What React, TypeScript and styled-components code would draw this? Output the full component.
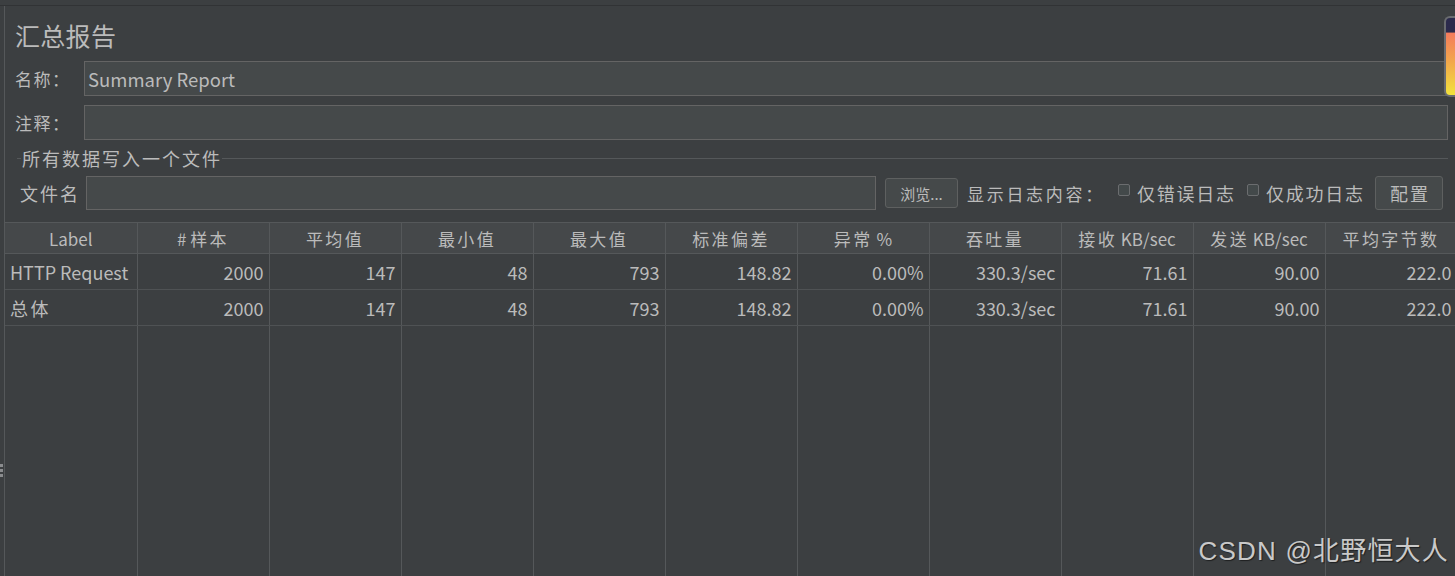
import React from "react";
import styled, { createGlobalStyle } from "styled-components";

const GlobalStyle = createGlobalStyle`
  html, body {
    margin: 0;
    padding: 0;
    background: #3c3f41;
    overflow: hidden;
  }
  * {
    box-sizing: border-box;
  }
`;

const font = `"Noto Sans CJK SC", "Noto Sans", sans-serif`;

const columns = [
  "Label",
  "# 样本",
  "平均值",
  "最小值",
  "最大值",
  "标准偏差",
  "异常 %",
  "吞吐量",
  "接收 KB/sec",
  "发送 KB/sec",
  "平均字节数",
];

const rows = [
  ["HTTP Request", "2000", "147", "48", "793", "148.82", "0.00%", "330.3/sec", "71.61", "90.00", "222.0"],
  ["总体", "2000", "147", "48", "793", "148.82", "0.00%", "330.3/sec", "71.61", "90.00", "222.0"],
];

// the Swing UI spaces han glyphs wider than latin ones, so wrap han runs
function spaced(text: string) {
  return text.split(/([\u3000-\u9fff\uff00-\uffef]+)/).map((part, i) =>
    /[\u3000-\u9fff\uff00-\uffef]/.test(part) ? <Han key={i}>{part}</Han> : part
  );
}

export default function App() {
  return (
    <>
      <GlobalStyle />
      <Frame>
        <TopStrip />
        <Body>
          <Rail>
            <Grip>
              <span />
              <span />
              <span />
            </Grip>
          </Rail>
          <Content>
            <Form>
              <Title>汇总报告</Title>
              <FieldRow>
                <FieldLabel>名称：</FieldLabel>
                <TextInput defaultValue="Summary Report" readOnly />
              </FieldRow>
              <FieldRow $last>
                <FieldLabel>注释：</FieldLabel>
                <TextInput defaultValue="" readOnly />
              </FieldRow>
              <Group>
                <GroupTitle>所有数据写入一个文件</GroupTitle>
                <FileRow>
                  <FileLabel>文件名</FileLabel>
                  <FileInput readOnly />
                  <SmallButton>浏览...</SmallButton>
                  <Caption>显示日志内容：</Caption>
                  <Check>
                    <Box />
                    仅错误日志
                  </Check>
                  <Check>
                    <Box />
                    仅成功日志
                  </Check>
                  <ConfigButton>配置</ConfigButton>
                </FileRow>
              </Group>
            </Form>
            <TableWrap>
              <Table>
                <colgroup>
                  {columns.map((c) => (
                    <col key={c} style={{ width: 132 }} />
                  ))}
                </colgroup>
                <thead>
                  <tr>
                    {columns.map((c) => (
                      <Th key={c}>{spaced(c)}</Th>
                    ))}
                  </tr>
                </thead>
                <tbody>
                  {rows.map((r, i) => (
                    <tr key={i}>
                      {r.map((v, j) => (
                        <Td key={j} $left={j === 0}>
                          {spaced(v)}
                        </Td>
                      ))}
                    </tr>
                  ))}
                  <tr>
                    {columns.map((c) => (
                      <Filler key={c} />
                    ))}
                  </tr>
                </tbody>
              </Table>
            </TableWrap>
          </Content>
        </Body>
        <Gauge />
        <Watermark>CSDN @北野恒大人</Watermark>
      </Frame>
    </>
  );
}

const Han = styled.span`
  letter-spacing: 2.4px;
`;

const Frame = styled.div`
  position: relative;
  width: 1455px;
  height: 576px;
  display: flex;
  flex-direction: column;
  background: #3c3f41;
  color: #bbbbbb;
  font-family: ${font};
  overflow: hidden;
`;

const TopStrip = styled.div`
  height: 6px;
  border-bottom: 1px solid #313335;
  flex-shrink: 0;
`;

const Body = styled.div`
  flex: 1;
  display: flex;
  min-height: 0;
`;

const Rail = styled.div`
  position: relative;
  width: 5px;
  border-right: 1px solid #55585a;
  flex-shrink: 0;
`;

const Grip = styled.div`
  position: absolute;
  left: 0;
  top: 458px;
  display: flex;
  flex-direction: column;
  gap: 2px;

  span {
    display: block;
    width: 3px;
    height: 3px;
    background: #8a8c8e;
  }
`;

const Content = styled.div`
  flex: 1;
  display: flex;
  flex-direction: column;
  min-width: 0;
`;

const Form = styled.div`
  padding: 13px 7px 0 10px;
  display: flex;
  flex-direction: column;
`;

const Title = styled.div`
  font-size: 25px;
  line-height: 32px;
  height: 34px;
  margin-bottom: 8px;
  letter-spacing: 0.3px;
`;

const FieldRow = styled.div<{ $last?: boolean }>`
  display: flex;
  align-items: center;
  margin-bottom: ${(p) => (p.$last ? 6 : 9)}px;
`;

const FieldLabel = styled.div`
  width: 69px;
  font-size: 17px;
  letter-spacing: 1.5px;
`;

const TextInput = styled.input`
  flex: 1;
  height: 35px;
  background: #45494a;
  border: 1px solid #646464;
  color: #bbbbbb;
  font-family: ${font};
  font-size: 18.5px;
  padding: 0 3px;
  outline: none;
`;

const Group = styled.div`
  display: flex;
  flex-direction: column;
  padding: 0 0 0 2px;
`;

const GroupTitle = styled.div`
  display: flex;
  align-items: center;
  font-size: 18px;
  line-height: 24px;
  letter-spacing: 2px;
  margin-bottom: 6px;

  &::before {
    content: "";
    width: 4px;
    height: 1px;
    background: #55585a;
    margin-right: 1px;
  }

  &::after {
    content: "";
    flex: 1;
    height: 1px;
    background: #55585a;
    margin-left: 0;
  }
`;

const FileRow = styled.div`
  display: flex;
  align-items: center;
  padding-left: 3px;
  height: 34px;
`;

const FileLabel = styled.div`
  width: 66px;
  font-size: 18px;
  letter-spacing: 2px;
`;

const FileInput = styled.input`
  width: 790px;
  height: 34px;
  background: #45494a;
  border: 1px solid #646464;
  outline: none;
`;

const SmallButton = styled.button`
  margin-left: 9px;
  height: 30px;
  width: 73px;
  background: #45494a;
  border: 1px solid #5e6060;
  border-radius: 3px;
  color: #bbbbbb;
  font-family: ${font};
  font-size: 15px;
  padding: 0;
`;

const Caption = styled.div`
  margin-left: 9px;
  font-size: 17px;
  letter-spacing: 2.7px;
`;

const Check = styled.div`
  display: flex;
  align-items: center;
  margin-left: 13px;
  font-size: 18px;
  letter-spacing: 1.8px;

  & + & {
    margin-left: 11px;
  }
`;

const Box = styled.span`
  width: 12px;
  height: 12px;
  border: 1px solid #6b6d6f;
  border-radius: 2px;
  background: #43494a;
  margin-right: 7px;
  margin-top: -7px;
`;

const ConfigButton = styled.button`
  margin-left: 10px;
  height: 34px;
  width: 68px;
  background: #45494a;
  border: 1px solid #5e6060;
  border-radius: 3px;
  color: #bbbbbb;
  font-family: ${font};
  font-size: 18px;
  letter-spacing: 2px;
  padding: 0 0 0 2px;
`;

const TableWrap = styled.div`
  flex: 1;
  margin-top: 12px;
  display: flex;
  min-height: 0;
`;

const Table = styled.table`
  table-layout: fixed;
  border-collapse: collapse;
  width: 1452px;
  height: 100%;
  flex-shrink: 0;
  border-top: 1px solid #55585a;
`;

const Th = styled.th`
  height: 31px;
  background: #45484a;
  border-right: 1px solid #55585a;
  border-bottom: 1px solid #55585a;
  font-weight: normal;
  font-size: 17px;
  color: #bbbbbb;
  text-align: center;
  padding: 0;
  white-space: nowrap;
  overflow: hidden;
`;

const Td = styled.td<{ $left?: boolean }>`
  height: 36px;
  border-right: 1px solid #55585a;
  border-bottom: 1px solid #4f5254;
  font-size: 18px;
  text-align: ${(p) => (p.$left ? "left" : "right")};
  padding: 0 5px 0 5px;
  white-space: nowrap;
  overflow: hidden;
`;

const Filler = styled.td`
  border-right: 1px solid #55585a;
`;

const Gauge = styled.div`
  position: absolute;
  right: 0;
  top: 16px;
  width: 11px;
  height: 81px;
  border: 2px solid #6a6c70;
  border-right: none;
  border-radius: 6px 0 0 6px;
  background: linear-gradient(
    180deg,
    #2b2a4c 0%,
    #2b2a4c 18%,
    #f47c5c 20%,
    #f2a54c 55%,
    #f2e23c 100%
  );
`;

const Watermark = styled.div`
  position: absolute;
  right: 6px;
  bottom: 9px;
  font-family: "Liberation Sans", "Noto Sans CJK SC", sans-serif;
  font-size: 26px;
  letter-spacing: 1.2px;
  color: #c9c9c9;
  text-shadow: 1px 1px 1px rgba(0, 0, 0, 0.5);
`;
